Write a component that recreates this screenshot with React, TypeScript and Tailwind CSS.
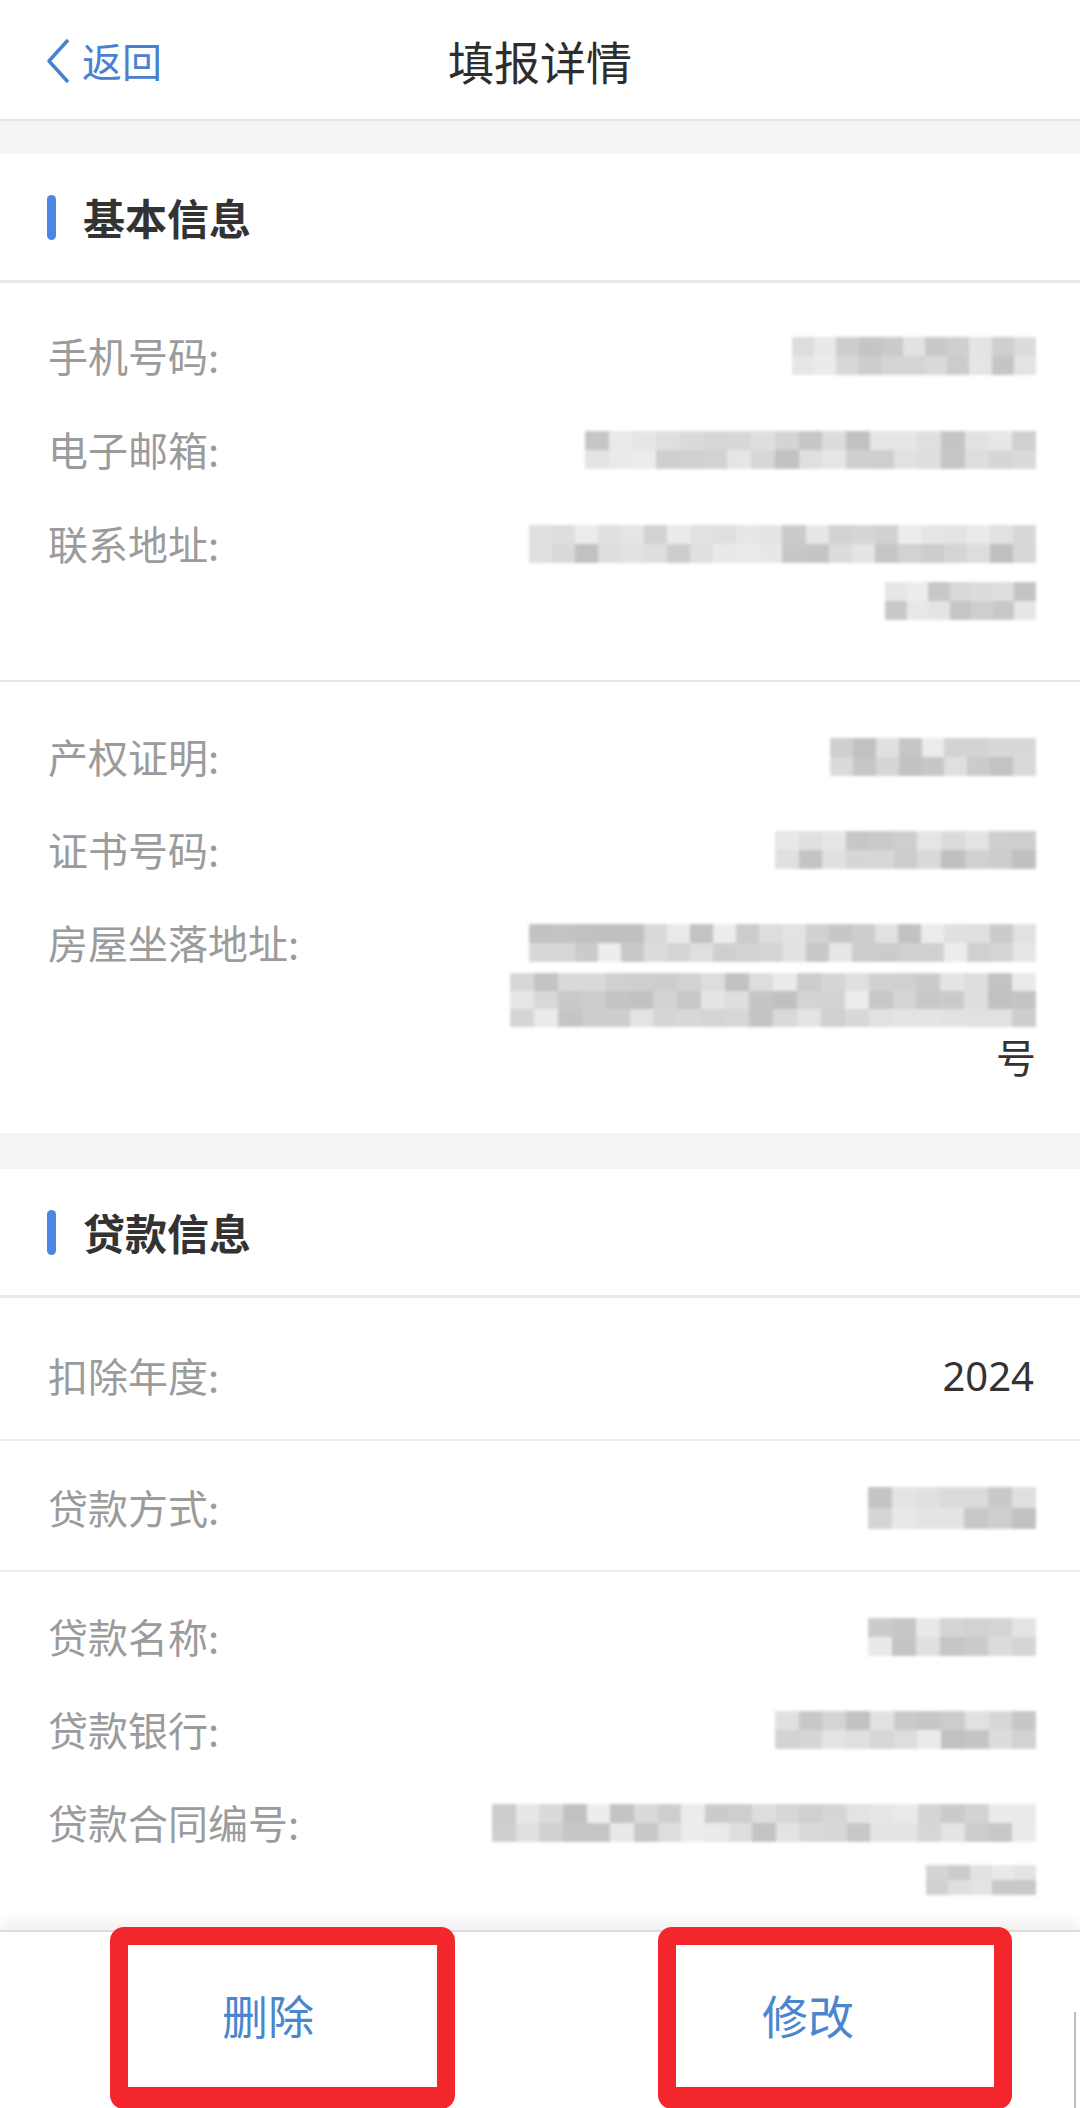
import React from "react";

const FONT = { fontFamily: '"Noto Sans CJK SC", "Noto Sans", sans-serif' };

function rand(seed: number) {
  let s = seed;
  return () => {
    s = (s * 9301 + 49297) % 233280;
    return s / 233280;
  };
}

function Mosaic({ w, h = 38, seed }: { w: number; h?: number; seed: number }) {
  const r = rand(seed);
  const cell = 24;
  const cols = Math.ceil(w / cell);
  const rows = Math.max(1, Math.round(h / 19));
  const cells: React.ReactNode[] = [];
  for (let y = 0; y < rows; y++) {
    for (let x = 0; x < cols; x++) {
      const v = Math.round(192 + r() * 45);
      cells.push(
        <div
          key={`${x}-${y}`}
          style={{ backgroundColor: `rgb(${v},${v},${v})` }}
        />
      );
    }
  }
  return (
    <div
      className="inline-grid align-middle"
      style={{
        width: w,
        height: h,
        gridTemplateColumns: `repeat(${cols}, 1fr)`,
        gridTemplateRows: `repeat(${rows}, 1fr)`,
        filter: "blur(1.5px)",
      }}
    >
      {cells}
    </div>
  );
}

function Item({
  label,
  lines,
}: {
  label: string;
  lines: React.ReactNode[];
}) {
  return (
    <div className="flex justify-between">
      <div className="text-[40px] leading-[57px] text-[#9b9b9b] whitespace-nowrap">{label}</div>
      <div className="flex flex-col items-end">
        {lines.map((l, i) => (
          <div key={i} className="h-[57px] flex items-center justify-end">
            {l}
          </div>
        ))}
      </div>
    </div>
  );
}

function SectionHeader({ title }: { title: string }) {
  return (
    <div className="h-[129px] flex items-center border-b-[3px] border-[#e9e9e9] bg-white">
      <div className="ml-[47px] w-[9px] h-[45px] rounded-full bg-[#4a87e4]" />
      <div className="ml-[27px] text-[42px] font-bold text-[#333333] leading-none">{title}</div>
    </div>
  );
}

export default function App() {
  return (
    <div className="relative w-[1080px] h-[2108px] overflow-hidden bg-white" style={FONT}>
      {/* Header */}
      <div className="h-[121px] grid grid-cols-[1fr_auto_1fr] items-center border-b-[2px] border-[#e4e6ea]">
        <div className="flex items-center pl-[45px]">
          <svg width="26" height="48" viewBox="0 0 26 48" className="mt-[2px]">
            <path d="M23 3 L4 24 L23 45" fill="none" stroke="#4a80d2" strokeWidth="3.5" strokeLinejoin="round" />
          </svg>
          <span className="ml-[11px] text-[40px] leading-none text-[#4a80d2]">返回</span>
        </div>
        <div className="text-[46px] leading-none text-[#2d2d2d]">填报详情</div>
        <div />
      </div>
      <div className="h-[33px] bg-[#f4f5f7]" />

      <SectionHeader title="基本信息" />
      <div className="px-[48px] pr-[44px] pt-[44px] pb-[51px] flex flex-col gap-[37px] border-b-[2px] border-[#e6e6e6]">
        <Item label="手机号码:" lines={[<Mosaic key="a" w={244} seed={11} />]} />
        <Item label="电子邮箱:" lines={[<Mosaic key="a" w={451} seed={23} />]} />
        <Item
          label="联系地址:"
          lines={[<Mosaic key="a" w={507} seed={37} />, <Mosaic key="b" w={151} seed={41} />]}
        />
      </div>
      <div className="px-[48px] pr-[44px] pt-[46px] pb-[48px] flex flex-col gap-[36px]">
        <Item label="产权证明:" lines={[<Mosaic key="a" w={206} seed={53} />]} />
        <Item label="证书号码:" lines={[<Mosaic key="a" w={261} seed={67} />]} />
        <Item
          label="房屋坐落地址:"
          lines={[
            <Mosaic key="a" w={507} seed={71} />,
            <Mosaic key="b" w={526} h={54} seed={83} />,
            <span key="c" className="text-[40px] leading-[57px] text-[#333333]">号</span>,
          ]}
        />
      </div>
      <div className="h-[36px] bg-[#f4f5f7]" />

      <SectionHeader title="贷款信息" />
      <div className="h-[143px] pt-[49px] px-[48px] pr-[46px] flex justify-between border-b-[2px] border-[#ececec]">
        <div className="text-[40px] leading-[57px] text-[#9b9b9b]">扣除年度:</div>
        <div className="text-[40px] leading-[57px] text-[#333333]" style={{ fontFamily: '"Noto Sans", sans-serif' }}>2024</div>
      </div>
      <div className="h-[131px] pt-[38px] px-[48px] pr-[44px] flex justify-between border-b-[2px] border-[#ececec]">
        <div className="text-[40px] leading-[57px] text-[#9b9b9b]">贷款方式:</div>
        <div className="h-[57px] flex items-center"><Mosaic w={168} h={42} seed={97} /></div>
      </div>
      <div className="px-[48px] pr-[44px] pt-[36px] flex flex-col gap-[36px]">
        <Item label="贷款名称:" lines={[<Mosaic key="a" w={168} seed={101} />]} />
        <Item label="贷款银行:" lines={[<Mosaic key="a" w={261} seed={113} />]} />
        <Item
          label="贷款合同编号:"
          lines={[<Mosaic key="a" w={544} seed={127} />, <Mosaic key="b" w={110} h={30} seed={131} />]}
        />
      </div>

      {/* Bottom bar */}
      <div className="absolute left-0 right-0 bottom-0 h-[178px] bg-white border-t-[2px] border-[#dcdcdc] shadow-[0_-10px_14px_rgba(0,0,0,0.06)] grid grid-cols-2">
        <div className="relative flex items-center justify-center">
          <span className="text-[46px] leading-none text-[#4a86d0] -mt-[12px] -ml-[4px]">删除</span>
          <div className="absolute left-[110px] top-[-5px] w-[345px] h-[182px] rounded-[14px] border-[18px] border-b-[22px] border-[#f3262b]" />
        </div>
        <div className="relative flex items-center justify-center">
          <span className="text-[46px] leading-none text-[#4a86d0] -mt-[12px] -ml-[4px]">修改</span>
          <div className="absolute left-[118px] top-[-5px] w-[354px] h-[182px] rounded-[14px] border-[18px] border-b-[22px] border-[#f3262b]" />
          <div className="absolute right-[4px] top-[80px] w-[2px] h-[110px] bg-[#bdbdbd]" />
        </div>
      </div>
    </div>
  );
}
